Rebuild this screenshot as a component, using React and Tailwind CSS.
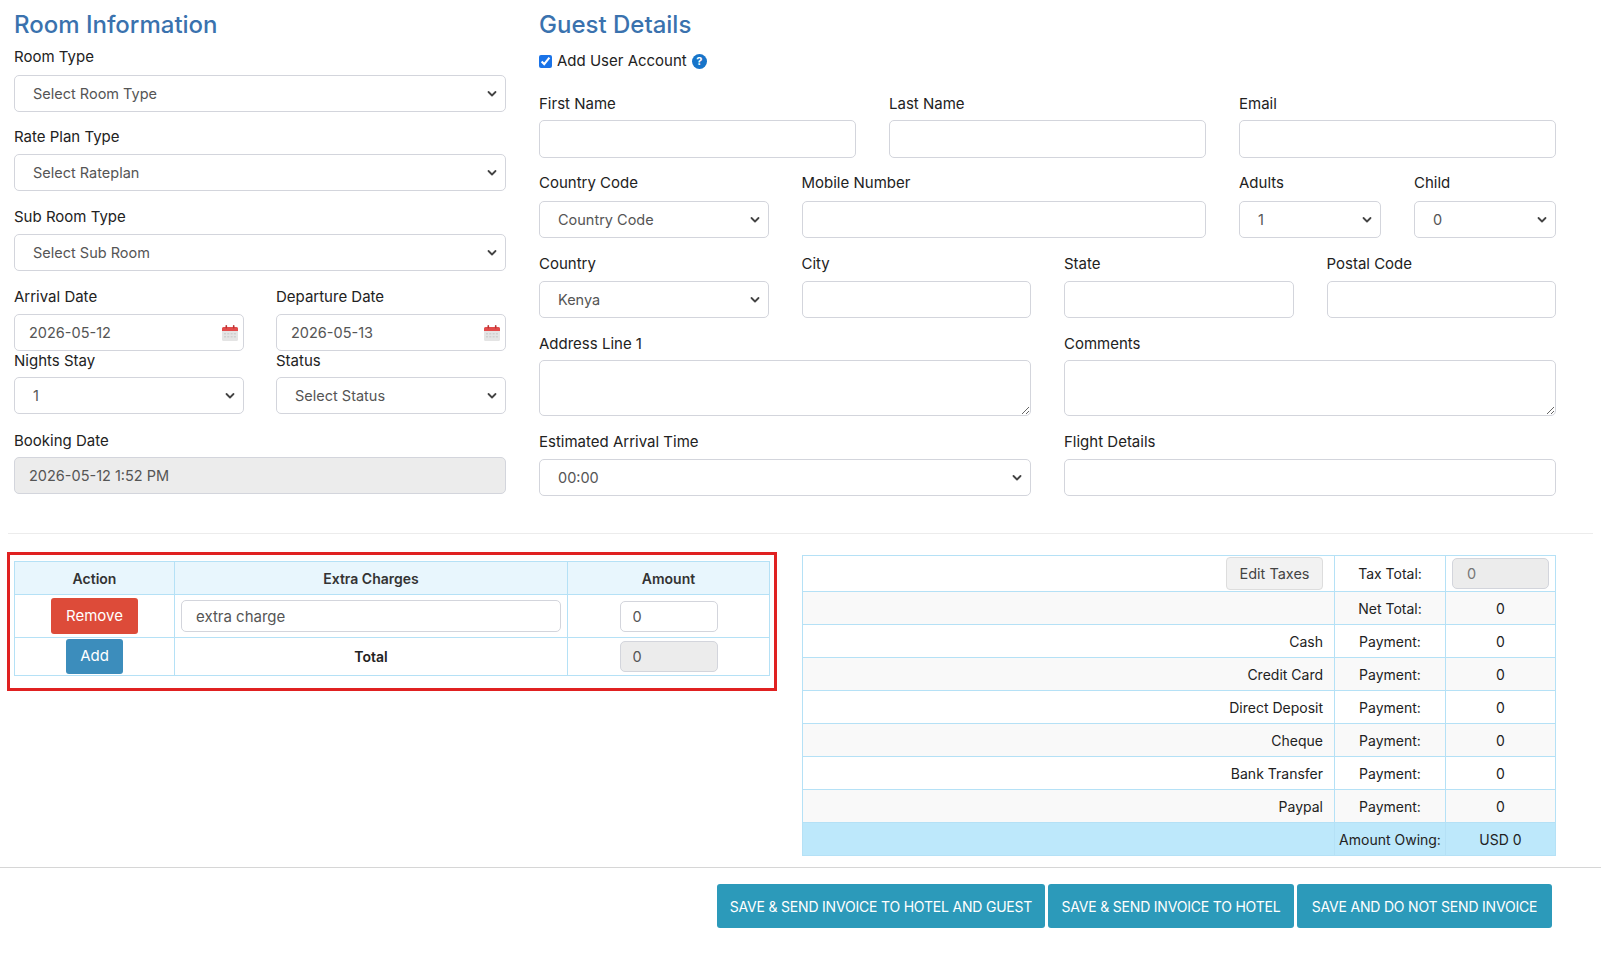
import React from "react";

const baseInput =
    "w-full h-[37px] rounded-[5px] border border-[#d3d5dc] px-[14px] text-[14.5px] text-[#555] outline-none";
const inputCls = `${baseInput} bg-white`;

function Chevron() {
    return (
        <svg className="pointer-events-none absolute right-[9px] top-1/2 -translate-y-1/2" width="10" height="7" viewBox="0 0 10 7">
            <path d="M1.5 1.5 L5 5 L8.5 1.5" fill="none" stroke="#444" strokeWidth="1.8" strokeLinecap="round" strokeLinejoin="round" />
        </svg>
    );
}

function Select({ value }) {
    return (
        <div className="relative">
            <select
                defaultValue={value}
                className="h-[37px] w-full appearance-none rounded-[5px] border border-[#d3d5dc] bg-white pl-[18px] pr-8 text-[14.5px] text-[#555] outline-none"
            >
                <option>{value}</option>
            </select>
            <Chevron />
        </div>
    );
}

function CalendarIcon() {
    return (
        <svg className="pointer-events-none absolute right-[5px] top-1/2 -translate-y-1/2" width="18" height="18" viewBox="0 0 18 18">
            <rect x="1" y="3" width="16" height="14" rx="1.5" fill="#e4e4e4" />
            <path d="M1 4.5 A1.5 1.5 0 0 1 2.5 3 H15.5 A1.5 1.5 0 0 1 17 4.5 V7 H1 Z" fill="#e24b4b" />
            <rect x="4.5" y="1" width="1.6" height="3.5" rx="0.8" fill="#b33" />
            <rect x="11.9" y="1" width="1.6" height="3.5" rx="0.8" fill="#b33" />
            <g fill="#cfcfcf">
                <rect x="3" y="9" width="2" height="1.5" />
                <rect x="6.3" y="9" width="2" height="1.5" />
                <rect x="9.6" y="9" width="2" height="1.5" />
                <rect x="12.9" y="9" width="2" height="1.5" />
                <rect x="3" y="12" width="2" height="1.5" />
                <rect x="6.3" y="12" width="2" height="1.5" />
                <rect x="9.6" y="12" width="2" height="1.5" />
                <rect x="12.9" y="12" width="2" height="1.5" />
            </g>
        </svg>
    );
}

function Label({ children, className = "" }) {
    return <div className={`text-[15px] leading-5 text-[#222] ${className}`}>{children}</div>;
}

function DateInput({ value }) {
    return (
        <div className="relative">
            <input readOnly value={value} className={inputCls} />
            <CalendarIcon />
        </div>
    );
}

const payments = [
    ["", "Net Total:", "0"],
    ["Cash", "Payment:", "0"],
    ["Credit Card", "Payment:", "0"],
    ["Direct Deposit", "Payment:", "0"],
    ["Cheque", "Payment:", "0"],
    ["Bank Transfer", "Payment:", "0"],
    ["Paypal", "Payment:", "0"],
];

export default function App() {
    return (
        <div className="min-h-[958px] bg-white font-['Inter',sans-serif] text-[#222]">
            <div className="grid grid-cols-[492px_1017px] gap-x-[33px] pl-[14px] pt-[10px]">
                {/* Room information */}
                <div>
                    <h2 className="text-[24px] font-medium leading-[30px] text-[#3a72ae]">Room Information</h2>
                    <Label className="mt-[7px] mb-2">Room Type</Label>
                    <Select value="Select Room Type" />
                    <Label className="mt-[15px] mb-[7px]">Rate Plan Type</Label>
                    <Select value="Select Rateplan" />
                    <Label className="mt-4 mb-[7px]">Sub Room Type</Label>
                    <Select value="Select Sub Room" />
                    <div className="mt-4 grid grid-cols-2 gap-x-8">
                        <div>
                            <Label className="mb-[7px]">Arrival Date</Label>
                            <DateInput value="2026-05-12" />
                        </div>
                        <div>
                            <Label className="mb-[7px]">Departure Date</Label>
                            <DateInput value="2026-05-13" />
                        </div>
                        <div>
                            <Label className="mb-[6px]">Nights Stay</Label>
                            <Select value="1" />
                        </div>
                        <div>
                            <Label className="mb-[6px]">Status</Label>
                            <Select value="Select Status" />
                        </div>
                    </div>
                    <Label className="mt-[17px] mb-[6px]">Booking Date</Label>
                    <input readOnly value="2026-05-12 1:52 PM" className={`${baseInput} bg-[#ececec]`} />
                </div>

                {/* Guest details */}
                <div>
                    <h2 className="text-[24px] font-medium leading-[30px] text-[#3a72ae]">Guest Details</h2>
                    <div className="mt-[11px] flex items-center gap-[5px] text-[15px] leading-5">
                        <input type="checkbox" defaultChecked className="h-[13px] w-[13px] accent-[#1a73e8]" />
                        <span>Add User Account</span>
                        <span className="flex h-[15px] w-[15px] items-center justify-center rounded-full bg-[#1774c9] text-[11px] font-bold leading-none text-white">?</span>
                    </div>
                    <div className="mt-[23px] grid grid-cols-12 gap-x-[33px]">
                        <div className="col-span-4">
                            <Label className="mb-[6px]">First Name</Label>
                            <input className={`${inputCls} h-[38px]`} />
                        </div>
                        <div className="col-span-4">
                            <Label className="mb-[6px]">Last Name</Label>
                            <input className={`${inputCls} h-[38px]`} />
                        </div>
                        <div className="col-span-4">
                            <Label className="mb-[6px]">Email</Label>
                            <input className={`${inputCls} h-[38px]`} />
                        </div>

                        <div className="col-span-3 mt-[15px]">
                            <Label className="mb-2">Country Code</Label>
                            <Select value="Country Code" />
                        </div>
                        <div className="col-span-5 mt-[15px]">
                            <Label className="mb-2">Mobile Number</Label>
                            <input className={inputCls} />
                        </div>
                        <div className="col-span-2 mt-[15px]">
                            <Label className="mb-2">Adults</Label>
                            <Select value="1" />
                        </div>
                        <div className="col-span-2 mt-[15px]">
                            <Label className="mb-2">Child</Label>
                            <Select value="0" />
                        </div>

                        <div className="col-span-3 mt-4">
                            <Label className="mb-[7px]">Country</Label>
                            <Select value="Kenya" />
                        </div>
                        <div className="col-span-3 mt-4">
                            <Label className="mb-[7px]">City</Label>
                            <input className={inputCls} />
                        </div>
                        <div className="col-span-3 mt-4">
                            <Label className="mb-[7px]">State</Label>
                            <input className={inputCls} />
                        </div>
                        <div className="col-span-3 mt-4">
                            <Label className="mb-[7px]">Postal Code</Label>
                            <input className={inputCls} />
                        </div>

                        <div className="col-span-6 mt-4">
                            <Label className="mb-[6px]">Address Line 1</Label>
                            <textarea className="block h-[56px] w-full rounded-[5px] border border-[#d3d5dc] px-[14px] text-[14.5px] outline-none" />
                        </div>
                        <div className="col-span-6 mt-4">
                            <Label className="mb-[6px]">Comments</Label>
                            <textarea className="block h-[56px] w-full rounded-[5px] border border-[#d3d5dc] px-[14px] text-[14.5px] outline-none" />
                        </div>

                        <div className="col-span-6 mt-4">
                            <Label className="mb-[7px]">Estimated Arrival Time</Label>
                            <Select value="00:00" />
                        </div>
                        <div className="col-span-6 mt-4">
                            <Label className="mb-[7px]">Flight Details</Label>
                            <input className={inputCls} />
                        </div>
                    </div>
                </div>
            </div>

            <div className="mx-2 mt-[37px] border-t border-[#ececec]" />

            {/* Charges & totals */}
            <div className="mt-[18px] flex items-start gap-[25px] pl-[7px]">
                <div className="w-[770px] border-[3px] border-[#e02121] px-1 pt-[6px] pb-3">
                    <table className="w-full border-collapse text-[14px]">
                        <thead>
                            <tr className="h-[33px] bg-[#e8f6fd]">
                                <th className="w-[160px] border border-[#b5e1f6] font-semibold text-[#333]">Action</th>
                                <th className="w-[393px] border border-[#b5e1f6] font-semibold text-[#333]">Extra Charges</th>
                                <th className="border border-[#b5e1f6] font-semibold text-[#333]">Amount</th>
                            </tr>
                        </thead>
                        <tbody>
                            <tr className="h-[43px]">
                                <td className="border border-[#b5e1f6] text-center">
                                    <button className="h-9 w-[87px] rounded-[3px] bg-[#dd4b39] text-[15px] text-white">Remove</button>
                                </td>
                                <td className="border border-[#b5e1f6] px-[6px]">
                                    <input defaultValue="extra charge" className="h-8 w-full rounded-[5px] border border-[#d3d5dc] px-[14px] text-[15px] text-[#555] outline-none" />
                                </td>
                                <td className="border border-[#b5e1f6] text-center">
                                    <input defaultValue="0" className="h-[31px] w-[98px] rounded-[5px] border border-[#d3d5dc] px-3 text-[14.5px] text-[#555] outline-none" />
                                </td>
                            </tr>
                            <tr className="h-[38px]">
                                <td className="border border-[#b5e1f6] text-center">
                                    <button className="h-[35px] w-[57px] rounded-[3px] bg-[#3c8dbc] text-[15px] text-white">Add</button>
                                </td>
                                <td className="border border-[#b5e1f6] text-center font-semibold">Total</td>
                                <td className="border border-[#b5e1f6] text-center">
                                    <input readOnly value="0" className="h-[31px] w-[98px] rounded-[5px] border border-[#d3d5dc] bg-[#ececec] px-3 text-[14.5px] text-[#555] outline-none" />
                                </td>
                            </tr>
                        </tbody>
                    </table>
                </div>

                <table className="mt-[3px] w-[754px] border-collapse text-[14px] text-[#222]">
                    <tbody>
                        <tr className="h-[36px]">
                            <td className="border border-[#b5e1f6] pr-[11px] text-right">
                                <button className="h-[33px] w-[97px] rounded-[4px] border border-[#ddd] bg-[#f2f2f2] text-[14.5px] text-[#444]">Edit Taxes</button>
                            </td>
                            <td className="w-[111px] border border-[#b5e1f6] text-center">Tax Total:</td>
                            <td className="w-[110px] border border-[#b5e1f6] px-[6px]">
                                <input readOnly value="0" className="h-[31px] w-full rounded-[5px] border border-[#d3d5dc] bg-[#ececec] px-[14px] text-[14.5px] text-[#777] outline-none" />
                            </td>
                        </tr>
                        {payments.map(([name, label, amt], i) => (
                            <tr key={label + name} className={`h-[33px] ${i % 2 === 0 ? "bg-[#f9f9f9]" : "bg-white"}`}>
                                <td className="border border-[#b5e1f6] pr-[11px] text-right">{name}</td>
                                <td className="border border-[#b5e1f6] text-center">{label}</td>
                                <td className="border border-[#b5e1f6] text-center">{amt}</td>
                            </tr>
                        ))}
                        <tr className="h-[33px] bg-[#bde8fb]">
                            <td className="border border-[#b5e1f6]" />
                            <td className="border border-[#b5e1f6] text-center">Amount Owing:</td>
                            <td className="border border-[#b5e1f6] text-center">USD 0</td>
                        </tr>
                    </tbody>
                </table>
            </div>

            <div className="mt-[11px] border-t border-[#d6d6d6]" />

            <div className="flex justify-end gap-[3px] pr-[49px] pt-[16px]">
                <button className="h-[44px] w-[328px] rounded-[3px] bg-[#2c9aba] text-[14px] tracking-[-0.2px] text-white">SAVE &amp; SEND INVOICE TO HOTEL AND GUEST</button>
                <button className="h-[44px] w-[246px] rounded-[3px] bg-[#2c9aba] text-[14px] tracking-[-0.2px] text-white">SAVE &amp; SEND INVOICE TO HOTEL</button>
                <button className="h-[44px] w-[255px] rounded-[3px] bg-[#2c9aba] text-[14px] tracking-[-0.2px] text-white">SAVE AND DO NOT SEND INVOICE</button>
            </div>
        </div>
    );
}
